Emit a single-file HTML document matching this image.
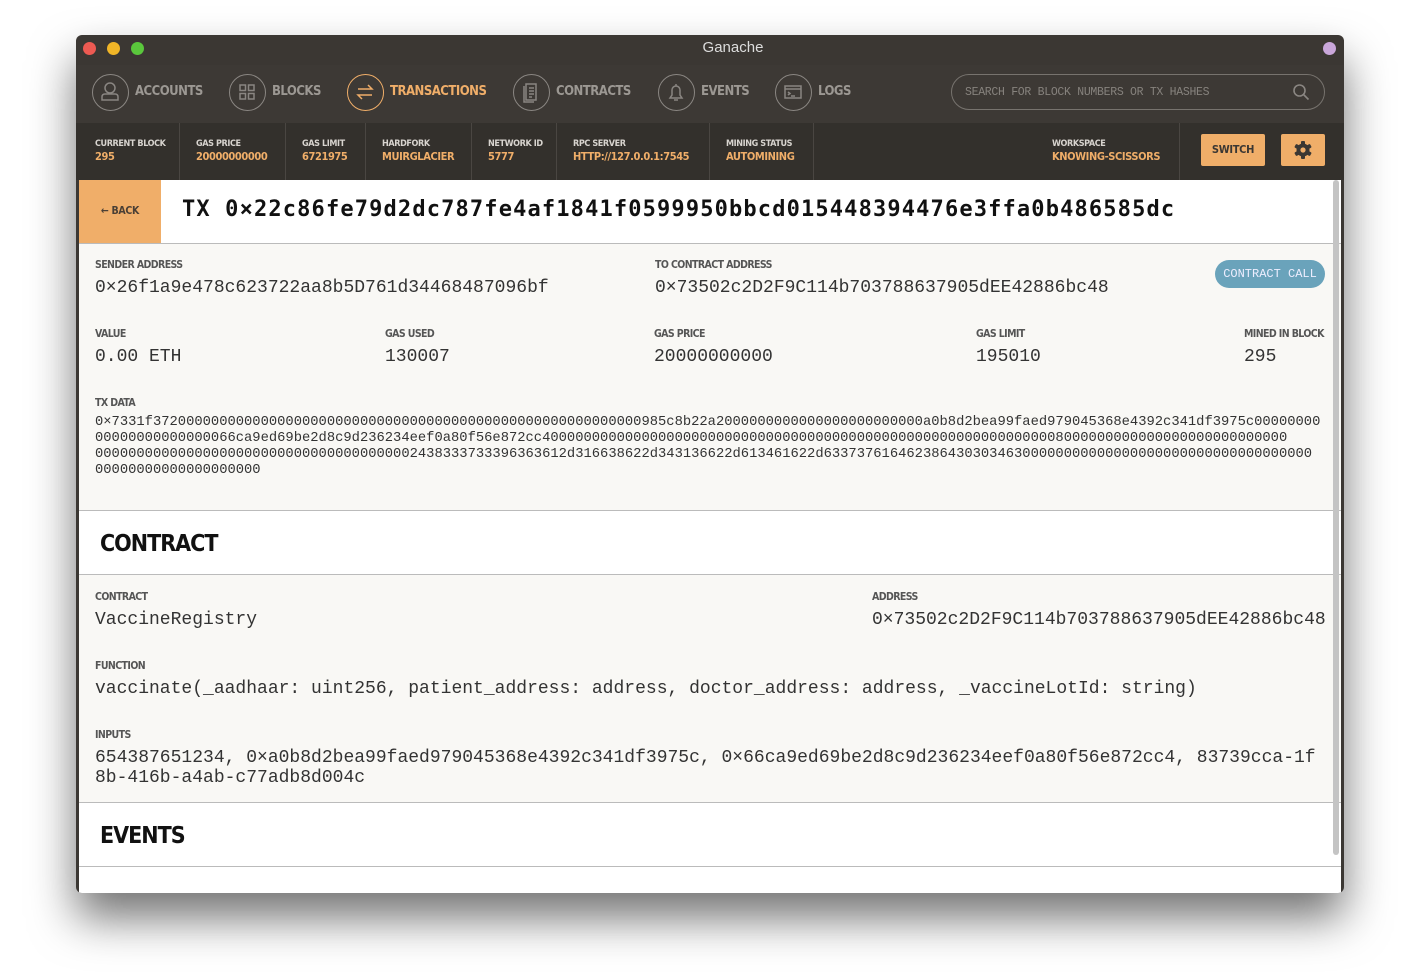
<!DOCTYPE html>
<html><head><meta charset="utf-8"><style>
*{margin:0;padding:0;box-sizing:border-box}
body{width:1420px;height:980px;background:#fff;position:relative;overflow:hidden;font-family:"DejaVu Sans Condensed","Liberation Sans",sans-serif}
.abs{position:absolute}
.win{position:absolute;left:76px;top:35px;width:1268px;height:858px;background:#3b3733;border-radius:6px;box-shadow:0 25px 45px rgba(0,0,0,.55);overflow:hidden}
.title{position:absolute;left:46px;top:0;width:1222px;height:30px;text-align:center;line-height:26px;color:#ddd;font-family:"Liberation Sans",sans-serif;font-size:15px}
.dot{position:absolute;top:7px;width:13px;height:13px;border-radius:50%}
.nav{position:absolute;top:30px;left:0;width:100%;height:58px;background:#3d3935}
.ni{position:absolute;top:9px;width:37px;height:37px;border:1.5px solid #8a8682;border-radius:50%}
.nl{position:absolute;top:19px;font-weight:bold;font-size:13px;color:#9c9893;letter-spacing:-.5px}
.stats{position:absolute;top:88px;left:0;width:100%;height:57px;background:#33302c}
.st{position:absolute;top:0;height:57px;border-right:1px solid #4a4642;padding:16px 0 0 16px}
.st .l{font-weight:bold;font-size:9px;color:#d8d4cf;letter-spacing:-.4px}
.st .v{font-weight:bold;font-size:11px;color:#f0ae69;letter-spacing:-.4px;margin-top:1px}
.content{position:absolute;left:3px;top:145px;width:1262px;height:713px;background:#fff;overflow:hidden}
.lab{position:absolute;font-weight:bold;font-size:10.5px;color:#555;letter-spacing:-.6px}
.mono{position:absolute;font-family:"Liberation Mono","DejaVu Sans Mono",monospace;color:#333;white-space:pre}
.v18{font-size:18px}
.h{position:absolute;font-weight:bold;font-size:23px;color:#111;letter-spacing:-1px}
</style></head><body>
<div class="win">
 <div class="title">Ganache</div>
 <div class="dot" style="left:7px;background:#ed5a52"></div>
 <div class="dot" style="left:31px;background:#f0b527"></div>
 <div class="dot" style="left:55px;background:#5ac73c"></div>
 <div class="dot" style="left:1247px;background:#c9a6d9"></div>
 <div class="nav">
  <div class="ni" style="left:16px"><svg width="34" height="34" viewBox="0 0 34 34" fill="none" stroke="#8a8682" stroke-width="1.5"><circle cx="17" cy="13" r="5"/><path d="M9 25v-3q0-3 3-3h10q3 0 3 3v3z"/></svg></div>
  <div class="nl" style="left:59px">ACCOUNTS</div>
  <div class="ni" style="left:153px"><svg width="34" height="34" viewBox="0 0 34 34" fill="none" stroke="#8a8682" stroke-width="1.5"><rect x="10" y="10" width="5.5" height="5.5"/><rect x="18.5" y="10" width="5.5" height="5.5"/><rect x="10" y="18.5" width="5.5" height="5.5"/><rect x="18.5" y="18.5" width="5.5" height="5.5"/></svg></div>
  <div class="nl" style="left:196px">BLOCKS</div>
  <div class="ni" style="left:271px;border-color:#f0ae69"><svg width="34" height="34" viewBox="0 0 34 34" fill="none" stroke="#f0ae69" stroke-width="1.5"><path d="M10 14h14l-4-4M24 20H10l4 4"/></svg></div>
  <div class="nl" style="left:314px;color:#f0ae69">TRANSACTIONS</div>
  <div class="ni" style="left:437px"><svg width="34" height="34" viewBox="0 0 34 34" fill="none" stroke="#8a8682" stroke-width="1.5"><path d="M12 9h10v16H12zM10 11v16h10M15 13h5M15 16h5M15 19h5M15 22h3"/></svg></div>
  <div class="nl" style="left:480px">CONTRACTS</div>
  <div class="ni" style="left:582px"><svg width="34" height="34" viewBox="0 0 34 34" fill="none" stroke="#8a8682" stroke-width="1.5"><path d="M11 23h12l-2-3v-5a4 4 0 0 0-8 0v5zM15 25h4M17 9v2"/></svg></div>
  <div class="nl" style="left:625px">EVENTS</div>
  <div class="ni" style="left:699px"><svg width="34" height="34" viewBox="0 0 34 34" fill="none" stroke="#8a8682" stroke-width="1.5"><rect x="9" y="11" width="16" height="12"/><path d="M9 14h16M12 17l2 1.5-2 1.5M15 21h4"/></svg></div>
  <div class="nl" style="left:742px">LOGS</div>
  <div class="abs" style="left:875px;top:9px;width:374px;height:36px;border:1px solid #77736e;border-radius:18px;font-family:'Liberation Mono',monospace;font-size:11.5px;color:#86827d;padding:11px 0 0 13px;letter-spacing:-.3px">SEARCH FOR BLOCK NUMBERS OR TX HASHES</div>
  <svg class="abs" style="left:1216px;top:18px" width="18" height="18" viewBox="0 0 18 18" fill="none" stroke="#8a8682" stroke-width="1.6"><circle cx="7.5" cy="7.5" r="5.5"/><path d="M11.5 11.5l5 5"/></svg>
 </div>
 <div class="stats">
  <div class="st" style="left:3px;width:101px"><div class="l">CURRENT BLOCK</div><div class="v">295</div></div>
  <div class="st" style="left:104px;width:106px"><div class="l">GAS PRICE</div><div class="v">20000000000</div></div>
  <div class="st" style="left:210px;width:80px"><div class="l">GAS LIMIT</div><div class="v">6721975</div></div>
  <div class="st" style="left:290px;width:106px"><div class="l">HARDFORK</div><div class="v">MUIRGLACIER</div></div>
  <div class="st" style="left:396px;width:85px"><div class="l">NETWORK ID</div><div class="v">5777</div></div>
  <div class="st" style="left:481px;width:153px"><div class="l">RPC SERVER</div><div class="v">HTTP://127.0.0.1:7545</div></div>
  <div class="st" style="left:634px;width:104px"><div class="l">MINING STATUS</div><div class="v">AUTOMINING</div></div>
  <div class="st" style="left:960px;width:144px"><div class="l">WORKSPACE</div><div class="v">KNOWING-SCISSORS</div></div>
  <div class="abs" style="left:1125px;top:11px;width:64px;height:32px;background:#f0ae69;border-radius:2px;text-align:center;line-height:32px;font-weight:bold;font-size:11px;letter-spacing:-.3px;color:#3b3733">SWITCH</div>
  <div class="abs" style="left:1205px;top:11px;width:44px;height:32px;background:#f0ae69;border-radius:2px"><svg style="position:absolute;left:12px;top:6px" width="20" height="20" viewBox="0 0 20 20"><g fill="#3b3733"><circle cx="10" cy="10" r="6.5"/><rect x="8" y="1" width="4" height="18" rx="1"/><rect x="8" y="1" width="4" height="18" rx="1" transform="rotate(60 10 10)"/><rect x="8" y="1" width="4" height="18" rx="1" transform="rotate(120 10 10)"/></g><circle cx="10" cy="10" r="2.6" fill="#f0ae69"/></svg></div>
 </div>
 <div class="content">
  <div class="abs" style="left:0;top:0;width:82px;height:63px;background:#f0ae69;font-weight:bold;font-size:10.5px;letter-spacing:-.3px;color:#4a3f35;text-align:center;line-height:63px">← BACK</div>
  <div class="mono" style="left:103px;top:17px;color:#111;font-weight:bold;font-family:'DejaVu Sans Mono','Liberation Mono',monospace;font-size:22px;letter-spacing:1.15px">TX 0×22c86fe79d2dc787fe4af1841f0599950bbcd015448394476e3ffa0b486585dc</div>
  <div class="abs" style="left:0;top:63px;width:1262px;height:268px;background:#f9f8f5;border-top:1px solid #bbb;border-bottom:1px solid #bbb"></div>
  <div class="lab" style="left:16px;top:79px">SENDER ADDRESS</div>
  <div class="mono v18" style="left:16px;top:98px">0×26f1a9e478c623722aa8b5D761d34468487096bf</div>
  <div class="lab" style="left:576px;top:79px">TO CONTRACT ADDRESS</div>
  <div class="mono v18" style="left:576px;top:98px">0×73502c2D2F9C114b703788637905dEE42886bc48</div>
  <div class="abs" style="left:1136px;top:80px;width:110px;height:28px;background:#6aa3bb;border-radius:14px;color:#eef;font-family:'Liberation Mono',monospace;font-size:12px;text-align:center;line-height:28px">CONTRACT CALL</div>
  <div class="lab" style="left:16px;top:148px">VALUE</div><div class="mono v18" style="left:16px;top:167px">0.00 ETH</div>
  <div class="lab" style="left:306px;top:148px">GAS USED</div><div class="mono v18" style="left:306px;top:167px">130007</div>
  <div class="lab" style="left:575px;top:148px">GAS PRICE</div><div class="mono v18" style="left:575px;top:167px">20000000000</div>
  <div class="lab" style="left:897px;top:148px">GAS LIMIT</div><div class="mono v18" style="left:897px;top:167px">195010</div>
  <div class="lab" style="left:1165px;top:148px">MINED IN BLOCK</div><div class="mono v18" style="left:1165px;top:167px">295</div>
  <div class="lab" style="left:16px;top:217px">TX DATA</div>
  <div class="mono" style="left:16px;top:235px;font-size:13.8px;line-height:16px">0×7331f37200000000000000000000000000000000000000000000000000000000985c8b22a2000000000000000000000000a0b8d2bea99faed979045368e4392c341df3975c00000000
00000000000000066ca9ed69be2d8c9d236234eef0a80f56e872cc400000000000000000000000000000000000000000000000000000000000008000000000000000000000000000
000000000000000000000000000000000000002438333733396363612d316638622d343136622d613461622d63373761646238643030346300000000000000000000000000000000000
00000000000000000000</div>
  <div class="h" style="left:21px;top:351px">CONTRACT</div>
  <div class="abs" style="left:0;top:394px;width:1262px;height:229px;background:#f9f8f5;border-top:1px solid #bbb;border-bottom:1px solid #bbb"></div>
  <div class="lab" style="left:16px;top:411px">CONTRACT</div><div class="mono v18" style="left:16px;top:430px">VaccineRegistry</div>
  <div class="lab" style="left:793px;top:411px">ADDRESS</div><div class="mono v18" style="left:793px;top:430px">0×73502c2D2F9C114b703788637905dEE42886bc48</div>
  <div class="lab" style="left:16px;top:480px">FUNCTION</div><div class="mono v18" style="left:16px;top:499px">vaccinate(_aadhaar: uint256, patient_address: address, doctor_address: address, _vaccineLotId: string)</div>
  <div class="lab" style="left:16px;top:549px">INPUTS</div><div class="mono v18" style="left:16px;top:568px;line-height:20px">654387651234, 0×a0b8d2bea99faed979045368e4392c341df3975c, 0×66ca9ed69be2d8c9d236234eef0a80f56e872cc4, 83739cca-1f
8b-416b-a4ab-c77adb8d004c</div>
  <div class="h" style="left:21px;top:643px">EVENTS</div>
  <div class="abs" style="left:0;top:686px;width:1262px;height:1px;background:#bbb"></div>
  <div class="abs" style="left:1254px;top:0;width:6px;height:675px;background:#c4c4c4;border-radius:3px"></div>
 </div>
</div>
</body></html>
